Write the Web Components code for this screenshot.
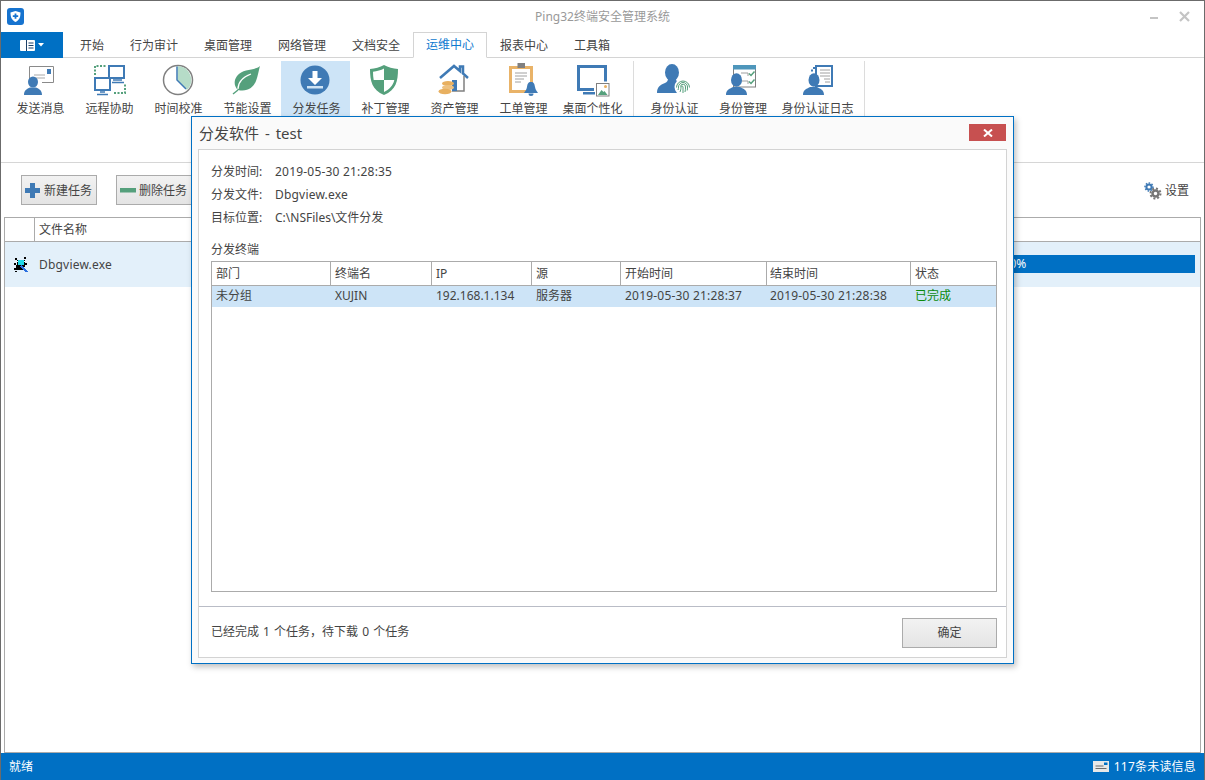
<!DOCTYPE html>
<html lang="zh">
<head>
<meta charset="utf-8">
<title>Ping32终端安全管理系统</title>
<style>
  html, body { margin: 0; padding: 0; height: 100%; overflow: hidden; }
  body { font: 12px/16px "Noto Sans", "Noto Sans CJK SC", sans-serif; color: #444; background: #fff; }
  svg { display: block; }
</style>
</head>
<body>
<app-window>
  <title-bar slot="top">Ping32终端安全管理系统</title-bar>
  <ribbon-tabs slot="top">
    <ribbon-tab style="width:50px">开始</ribbon-tab>
    <ribbon-tab>行为审计</ribbon-tab>
    <ribbon-tab>桌面管理</ribbon-tab>
    <ribbon-tab>网络管理</ribbon-tab>
    <ribbon-tab>文档安全</ribbon-tab>
    <ribbon-tab active>运维中心</ribbon-tab>
    <ribbon-tab>报表中心</ribbon-tab>
    <ribbon-tab style="width:62px">工具箱</ribbon-tab>
  </ribbon-tabs>
  <ribbon-bar slot="top">
    <ribbon-group>
      <ribbon-button>
        <svg slot="icon" width="36" height="36" viewBox="0 0 36 36"><path d="M6.500 19V4.500h24v16H19" fill="#fff" stroke="#8a8a8a"/><rect x="24" y="7" width="4" height="5" fill="#3f7ab5"/><path d="M11 13h11M11 16h11" stroke="#a9a9a9"/><ellipse cx="10" cy="20" rx="5" ry="5.600" fill="#3f7ab5"/><path d="M1 33c0-5 3-6 6-7.500h6c3 1.500 6 2.500 6 7.500z" fill="#3f7ab5"/></svg>
        发送消息
      </ribbon-button>
      <ribbon-button>
        <svg slot="icon" width="36" height="36" viewBox="0 0 36 36"><path d="M3 13V4h11M22 31h11V21" fill="none" stroke="#55a07c" stroke-width="2" stroke-dasharray="2 1.500"/><path d="M17 4h15v12H17z" fill="#fff" stroke="#3f7ab5" stroke-width="2"/><path d="M21 18h9M20 20.500h12" stroke="#3f7ab5" stroke-width="1.500"/><path d="M3 16h15v12H3z" fill="#fff" stroke="#3f7ab5" stroke-width="2"/><path d="M8 30h5M5 32.500h11" stroke="#3f7ab5" stroke-width="1.500"/></svg>
        远程协助
      </ribbon-button>
      <ribbon-button>
        <svg slot="icon" width="36" height="36" viewBox="0 0 36 36"><circle cx="17" cy="18" r="14.500" fill="#fff" stroke="#808080" stroke-width="1.500"/><path d="M16.500 18V4a14 14 0 0 1 9.500 24z" fill="#b6dcc8"/><path d="M16 4.500V18l9 9" fill="none" stroke="#3f7ab5" stroke-width="1.500"/></svg>
        时间校准
      </ribbon-button>
      <ribbon-button>
        <svg slot="icon" width="36" height="36" viewBox="0 0 36 36"><path d="M30 4c-5 5-17 2-23 10-3.500 5-3 10 1 14 9 2 15-2 18-9 2-5 3-12 4-15z" fill="#55a07c"/><path d="M8 28L3 32" stroke="#55a07c" stroke-width="1.500"/><path d="M8 27c0-7 5-12 13-15" fill="none" stroke="#fff" stroke-width="1.200"/></svg>
        节能设置
      </ribbon-button>
      <ribbon-button hot>
        <svg slot="icon" width="36" height="36" viewBox="0 0 36 36"><circle cx="16" cy="18" r="14.500" fill="#3f7ab5"/><path d="M13.500 9h5v7H23l-7 7-7-7h4.500z" fill="#fff"/><rect x="8" y="24" width="16" height="2.500" fill="#cfe3f4"/></svg>
        分发任务
      </ribbon-button>
      <ribbon-button>
        <svg slot="icon" width="36" height="36" viewBox="0 0 36 36"><path d="M16 3c4 2.500 9 3.500 14 4 0 12-2 21-14 26C4 28 2 19 2 7c5-.5 10-1.500 14-4z" fill="#55a07c"/><path d="M16 6.500c-3 1.800-7 2.800-11 3.200 0 3 .2 5.800.7 8.300H16zM16 18v12c5-2.500 9-6 10.300-12z" fill="#fff"/></svg>
        补丁管理
      </ribbon-button>
      <ribbon-button>
        <svg slot="icon" width="36" height="36" viewBox="0 0 36 36"><path d="M3 16L17 4l6 5V4.500h3v7l5 4.500" fill="none" stroke="#3f7ab5" stroke-width="2.500"/><path d="M27 14v15H15" fill="none" stroke="#808080" stroke-width="1.500"/><rect x="15" y="18" width="5" height="11" fill="#3f7ab5"/><ellipse cx="11" cy="21.500" rx="6" ry="2.500" fill="#e8b060"/><ellipse cx="11" cy="25.500" rx="6" ry="2.500" fill="#edc180"/><ellipse cx="8" cy="29.500" rx="6.500" ry="2.700" fill="#e8b060"/></svg>
        资产管理
      </ribbon-button>
      <ribbon-button>
        <svg slot="icon" width="36" height="36" viewBox="0 0 36 36"><rect x="3" y="4" width="24" height="27" fill="#e9b368"/><rect x="6" y="7" width="18" height="21" fill="#fff"/><rect x="11.500" y="1" width="7.500" height="5" fill="#808080"/><path d="M9 11h12M9 14h12M9 17h9M9 20h6" stroke="#a0a0a0"/><path d="M25 20c3 0 3.500 2 4 5 .5 3 2 4 3 6H18c1-2 2.500-3 3-6 .5-3 1-5 4-5z" fill="#3f7ab5"/><path d="M22.500 31.500h5a2.500 2.500 0 0 1-5 0z" fill="#3f7ab5"/></svg>
        工单管理
      </ribbon-button>
      <ribbon-button>
        <svg slot="icon" width="36" height="36" viewBox="0 0 36 36"><path d="M19 27.500H3.500v-23h27v15" fill="none" stroke="#3f7ab5" stroke-width="3"/><rect x="8" y="30" width="12" height="2.500" fill="#3f7ab5"/><rect x="21.500" y="21.500" width="12.500" height="12.500" fill="#fff" stroke="#808080"/><path d="M23 33l3.500-5 2 2 1-1 3 4z" fill="#55a07c"/><circle cx="30.500" cy="24.500" r="1.500" fill="#e8b060"/></svg>
        桌面个性化
      </ribbon-button>
    </ribbon-group>
    <ribbon-group style="margin-right:0">
      <ribbon-button>
        <svg slot="icon" width="36" height="36" viewBox="0 0 36 36"><ellipse cx="15" cy="10.500" rx="7" ry="8.500" fill="#3f7ab5"/><path d="M0 31c0-6 3-8 8-10 2-1 3-2 3-5h8c0 3 1 4 3 5l3 2v8z" fill="#3f7ab5"/><circle cx="26" cy="25" r="8.500" fill="#fff"/><g fill="none" stroke="#55a07c" stroke-width="1"><path d="M26 31v-6a1 1 0 0 0-2 0c0 2-.5 4-1 5M28 30c.5-2 .5-3.500.5-5a2.500 2.500 0 0 0-5-.5M21 28c.5-1 .5-2 .5-3a4.500 4.500 0 0 1 9 0c0 1.500 0 2.500-.3 3.500M19.500 25.500a6.500 6.500 0 0 1 13 0"/></g></svg>
        身份认证
      </ribbon-button>
      <ribbon-button style="width:68px">
        <svg slot="icon" width="36" height="36" viewBox="0 0 36 36"><rect x="8.500" y="3.500" width="22" height="21.500" fill="#fff" stroke="#808080"/><rect x="8" y="3" width="23" height="4.500" fill="#4e96bb"/><path d="M16 11h7v3M16 19h7v3" fill="none" stroke="#a0a0a0"/><path d="M24 11.500l2 2 3.500-4M24 19.500l2 2 3.500-4" fill="none" stroke="#55a07c" stroke-width="1.500"/><ellipse cx="11.500" cy="18" rx="5.500" ry="6.800" fill="#3f7ab5"/><path d="M1 33c0-5 3-6 7-8h7c4 2 7 3 7 8z" fill="#3f7ab5"/></svg>
        身份管理
      </ribbon-button>
      <ribbon-button style="width:81px">
        <svg slot="icon" width="36" height="36" viewBox="0 0 36 36"><rect x="16" y="4" width="16" height="20" fill="#fff" stroke="#3f7ab5" stroke-width="2"/><path d="M20 8h10M20 11h10M20 14h10M24 17h6M25 20h5" stroke="#a0a0a0"/><path d="M13 5h2v2h-2zM11 7.500h2v2h-2zM15 7.500h2v2h-2z" fill="#3f7ab5"/><ellipse cx="14" cy="18" rx="5.500" ry="6.800" fill="#3f7ab5"/><path d="M3 33c0-5 3-6 7-8h7c4 2 7 3 7 8z" fill="#3f7ab5"/></svg>
        身份认证日志
      </ribbon-button>
    </ribbon-group>
  </ribbon-bar>
  <task-toolbar slot="top">
    <tool-button>
      <svg slot="icon" width="17" height="17" viewBox="0 0 17 17"><path d="M6 1h5v5h5v5h-5v5H6v-5H1V6h5z" fill="#3f7ab5"/></svg>
      新建任务
    </tool-button>
    <tool-button>
      <svg slot="icon" width="17" height="17" viewBox="0 0 17 17"><rect x="1" y="6" width="16" height="4.500" fill="#55a07c"/></svg>
      删除任务
    </tool-button>
    <settings-link slot="end">
      <svg slot="icon" width="18" height="18" viewBox="0 0 18 18"><g fill="none"><circle cx="5" cy="5" r="2.600" stroke="#3f7ab5" stroke-width="2"/><circle cx="5" cy="5" r="4" stroke="#3f7ab5" stroke-width="1.500" stroke-dasharray="1.500 1.500"/><circle cx="11.500" cy="11.500" r="3" stroke="#777" stroke-width="2.500"/><circle cx="11.500" cy="11.500" r="5" stroke="#777" stroke-width="2" stroke-dasharray="2 1.900"/></g></svg>
      设置
    </settings-link>
  </task-toolbar>
  <task-list>
    <svg slot="icon" width="16" height="16" viewBox="0 0 16 16" shape-rendering="crispEdges"><path d="M2 1h2v2H2zM11 0h2v2h-2zM1 6h2v2H1zM12 6h2v2h-2zM1 11h2v2H1zM4 3h8v7H4zM3 8h3v5H3zM6 10h4v3H6zM2 14h2v1H2z" fill="#000"/><path d="M5 3h6v5H5z" fill="#1fd8e8"/><path d="M8 8l6 5 1 2-2 0-6-5z" fill="#2a6fe0"/><path d="M4 4h1v1H4zM11 4h1v1h-1z" fill="#fff"/></svg>
    Dbgview.exe
  </task-list>
  <status-bar slot="bottom">就绪</status-bar>
  <modal-dialog heading="分发软件 - test">
    <info-line label="分发时间:" wide>2019-05-30 21:28:35</info-line>
    <info-line label="分发文件:" wide>Dbgview.exe</info-line>
    <info-line label="目标位置:">C:\NSFiles\文件分发</info-line>
    <terminal-grid></terminal-grid>
    <span slot="foot">已经完成 1 个任务，待下载 0 个任务</span>
  </modal-dialog>
</app-window>

<script>
  function define(name, html) {
    customElements.define(name, class extends HTMLElement {
      constructor() {
        super();
        this.attachShadow({ mode: "open" });
        this.shadowRoot.innerHTML = html;
      }
    });
  }

  define("app-window", `
    <style>
      :host { display: flex; flex-direction: column; position: relative; box-sizing: border-box;
              width: 1205px; height: 780px; border: 1px solid #6b6b6b; border-bottom: 0; background: #fff; overflow: hidden; }
      .middle { flex: 1; min-height: 0; display: flex; padding: 0 3px 0 3px; }
    </style>
    <slot name="top"></slot>
    <div class="middle"><slot></slot></div>
    <slot name="bottom"></slot>
  `);

  define("title-bar", `
    <style>
      :host { display: flex; align-items: center; height: 31px; flex: none; color: #999; position: relative; }
      .logo { position: absolute; left: 6px; top: 7px; }
      .name { flex: 1; text-align: center; }
      .caption { position: absolute; right: 14px; top: 10px; display: flex; gap: 21px; align-items: center; }
    </style>
    <svg class="logo" width="17" height="17" viewBox="0 0 17 17">
      <rect width="17" height="17" rx="3" fill="#1673cf"/>
      <path d="M8.500 3l5 1.500c0 4.500-1 7.500-5 9.500-4-2-5-5-5-9.500z" fill="#fff"/>
      <path d="M7.600 5.500h1.800v1.800h1.800v1.600H9.400v1.800H7.600V8.900H5.800V7.300h1.800z" fill="#1673cf"/>
    </svg>
    <div class="name"><slot></slot></div>
    <div class="caption">
      <svg width="8" height="11" viewBox="0 0 8 11"><rect y="6" width="8" height="2" fill="#c4c4c4"/></svg>
      <svg width="11" height="11" viewBox="0 0 11 11"><path d="M1 1l9 9M10 1l-9 9" stroke="#c4c4c4" stroke-width="2.200"/></svg>
    </div>
  `);

  define("ribbon-tabs", `
    <style>
      :host { display: flex; height: 26px; flex: none; position: relative; box-sizing: border-box; border-bottom: 1px solid #d4d4d4; }
      .file { width: 62px; height: 26px; background: #0070c4; display: flex; align-items: center; justify-content: center; gap: 3px; margin-right: 4px; }
    </style>
    <div class="file">
      <svg width="15" height="11" viewBox="0 0 15 11"><rect width="15" height="11" rx="1" fill="#fff"/><rect x="6" width="1" height="11" fill="#1b3f66"/><path d="M8.500 3h5M8.500 5.500h5M8.500 8h5" stroke="#1b3f66"/></svg>
      <svg width="6" height="4" viewBox="0 0 6 4"><path d="M0 0h6L3 3.500z" fill="#fff"/></svg>
    </div>
    <slot></slot>
  `);

  define("ribbon-tab", `
    <style>
      :host { display: flex; align-items: center; justify-content: center; width: 74px; height: 26px; box-sizing: border-box; padding-top: 2px; color: #444; }
      :host([active]) { border: 1px solid #d4d4d4; border-bottom: 1px solid #fff; color: #0f7ad0; padding-top: 0; }
    </style>
    <slot></slot>
  `);

  define("ribbon-bar", `
    <style>
      :host { display: flex; height: 105px; flex: none; box-sizing: border-box; padding: 3px 0 0 5px; border-bottom: 1px solid #d6d6d6; background: #fff; }
    </style>
    <slot></slot>
  `);

  define("ribbon-group", `
    <style>
      :host { display: flex; height: 56px; padding-right: 6px; margin-right: 6px; border-right: 1px solid #dcdcdc; }
    </style>
    <slot></slot>
  `);

  define("ribbon-button", `
    <style>
      :host { display: flex; flex-direction: column; align-items: center; position: relative; z-index: 0; width: 69px; height: 56px; box-sizing: border-box; padding-top: 1px; color: #444; white-space: nowrap; }
      :host([hot])::before { content: ""; position: absolute; z-index: -1; left: -1px; right: 1px; top: 0; bottom: 0; background: #cde4f7; }
      .label { margin-top: 3px; line-height: 16px; }
    </style>
    <slot name="icon"></slot>
    <div class="label"><slot></slot></div>
  `);

  define("task-toolbar", `
    <style>
      :host { display: flex; height: 54px; flex: none; box-sizing: border-box; padding: 12px 15px 0 20px; gap: 19px; align-items: flex-start; }
      .end { margin-left: auto; padding-top: 7px; }
    </style>
    <slot></slot>
    <div class="end"><slot name="end"></slot></div>
  `);

  define("tool-button", `
    <style>
      :host { display: flex; align-items: center; gap: 3px; height: 30px; box-sizing: border-box; padding: 1px 4px 0 2px;
              border: 1px solid #ababab; background: linear-gradient(#f2f2f2, #e4e4e4); color: #444; white-space: nowrap; }
    </style>
    <slot name="icon"></slot><slot></slot>
  `);

  define("settings-link", `
    <style>
      :host { display: flex; align-items: center; gap: 3px; color: #444; white-space: nowrap; }
    </style>
    <slot name="icon"></slot><slot></slot>
  `);

  define("task-list", `
    <style>
      :host { display: flex; flex-direction: column; flex: 1; box-sizing: border-box; border: 1px solid #ababab; background: #fff; }
      .head { display: flex; height: 24px; box-sizing: border-box; border-bottom: 1px solid #ababab; flex: none; }
      .c0 { width: 29px; border-right: 1px solid #ababab; flex: none; }
      .c1 { padding-left: 4px; line-height: 23px; }
      .row { display: flex; align-items: center; height: 45px; background: #e3f0fa; flex: none; position: relative; }
      .ico { width: 16px; margin-left: 8px; flex: none; }
      .name { margin-left: 10px; letter-spacing: .2px; }
      .bar { position: absolute; left: 822px; right: 5px; top: 13px; height: 18px; background: #0070c4; color: #fff; text-align: center; line-height: 18px; }
    </style>
    <div class="head"><div class="c0"></div><div class="c1">文件名称</div></div>
    <div class="row">
      <div class="ico"><slot name="icon"></slot></div>
      <div class="name"><slot></slot></div>
      <div class="bar">100%</div>
    </div>
  `);

  define("status-bar", `
    <style>
      :host { display: flex; align-items: center; justify-content: space-between; height: 27px; flex: none; box-sizing: border-box;
              margin: 0 -1px; padding: 0 9px 0 9px; background: #0070c4; color: #fff; }
      .msg { display: flex; align-items: center; gap: 5px; }
      .msg span { letter-spacing: .2px; }
    </style>
    <div><slot></slot></div>
    <div class="msg">
      <svg width="16" height="11" viewBox="0 0 16 11"><rect width="16" height="11" fill="#e8e8e8"/><path d="M2.500 5h8M2.500 7.500h11" stroke="#6b6b6b"/><rect x="11" y="1.500" width="3.500" height="2.500" fill="#0070c4"/></svg>
      <span>117条未读信息</span>
    </div>
  `);

  customElements.define("modal-dialog", class extends HTMLElement {
    constructor() {
      super();
      this.attachShadow({ mode: "open" }).innerHTML = `
        <style>
          :host { position: absolute; left: 190px; top: 115px; width: 823px; height: 548px; box-sizing: border-box; display: flex; flex-direction: column; z-index: 1;
                  border: 1px solid #0070c4; background: #fafafa; box-shadow: 2px 3px 6px rgba(0,0,0,.25); color: #444; }
          .title { display: flex; justify-content: space-between; height: 32px; flex: none; box-sizing: border-box; padding: 0 7px 0 7px; }
          h1 { margin: 0; font: inherit; font-size: 15px; line-height: 32px; color: #444; word-spacing: 2px; }
          .close { width: 37px; height: 17px; margin-top: 7px; background: #c75050; display: flex; align-items: center; justify-content: center; }
          .panel { flex: 1; margin: 0 6px 5px 6px; border: 1px solid #d3d3d3; background: #fff; display: flex; flex-direction: column; min-height: 0; }
          .body { flex: 1; min-height: 0; display: flex; flex-direction: column; padding: 10px 9px 0 12px; border-bottom: 1px solid #b9bcc6; }
          .foot { height: 50px; flex: none; box-sizing: border-box; display: flex; justify-content: space-between; align-items: center; padding: 0 9px 0 12px; word-spacing: 1px; }
          .ok { width: 95px; height: 30px; box-sizing: border-box; border: 1px solid #ababab; background: linear-gradient(#f2f2f2, #e4e4e4); display: flex; align-items: center; justify-content: center; margin-top: 1px; }
        </style>
        <div class="title">
          <h1></h1>
          <div class="close"><svg width="10" height="8" viewBox="0 0 10 8"><path d="M1 .5l8 7M9 .5l-8 7" stroke="#fff" stroke-width="2"/></svg></div>
        </div>
        <div class="panel">
          <div class="body"><slot></slot></div>
          <div class="foot"><div><slot name="foot"></slot></div><div class="ok">确定</div></div>
        </div>`;
    }
    connectedCallback() {
      this.shadowRoot.querySelector("h1").textContent = this.getAttribute("heading");
    }
  });

  customElements.define("info-line", class extends HTMLElement {
    constructor() {
      super();
      this.attachShadow({ mode: "open" }).innerHTML = `
        <style>
          :host { display: flex; height: 23px; align-items: center; flex: none; white-space: nowrap; }
          :host([wide]) .v { letter-spacing: .2px; }
          .k { width: 64px; flex: none; }
        </style>
        <div class="k"></div><div class="v"><slot></slot></div>`;
    }
    connectedCallback() {
      this.shadowRoot.querySelector(".k").textContent = this.getAttribute("label");
    }
  });

  // 表格列和数据
  const columns = [
    ["部门", 119], ["终端名", 101], ["IP", 100], ["源", 89],
    ["开始时间", 146], ["结束时间", 144], ["状态", 85]
  ];
  const rows = [
    ["未分组", "XUJIN", "192.168.1.134", "服务器", "2019-05-30 21:28:37", "2019-05-30 21:28:38", "已完成"]
  ];

  customElements.define("terminal-grid", class extends HTMLElement {
    constructor() {
      super();
      const head = columns.map(c => `<div class="h" style="width:${c[1]}px">${c[0]}</div>`).join("");
      const body = rows.map(r => `<div class="r">` + r.map((v, i) =>
        `<div class="d${i == 6 ? " ok" : ""}${i == 4 || i == 5 ? " t" : ""}" style="width:${columns[i][1]}px">${v}</div>`).join("") + `</div>`).join("");
      this.attachShadow({ mode: "open" }).innerHTML = `
        <style>
          :host { display: flex; flex-direction: column; flex: none; margin-top: 12px; }
          .cap { height: 20px; line-height: 18px; }
          .box { height: 331px; box-sizing: border-box; border: 1px solid #ababab; }
          .hr { display: flex; height: 24px; box-sizing: border-box; border-bottom: 1px solid #ababab; }
          .h { box-sizing: border-box; padding-left: 4px; line-height: 23px; border-right: 1px solid #ababab; }
          .h:last-child { border-right: 0; }
          .h:nth-child(6), .d:nth-child(6) { padding-left: 3px; }
          .r { display: flex; height: 21px; background: #cde4f7; }
          .d { box-sizing: border-box; padding-left: 4px; line-height: 20px; white-space: nowrap; }
          .t { letter-spacing: .2px; }
          .ok { color: #0b8a0b; }
        </style>
        <div class="cap">分发终端</div>
        <div class="box"><div class="hr">${head}</div>${body}</div>`;
    }
  });
</script>
</body>
</html>
